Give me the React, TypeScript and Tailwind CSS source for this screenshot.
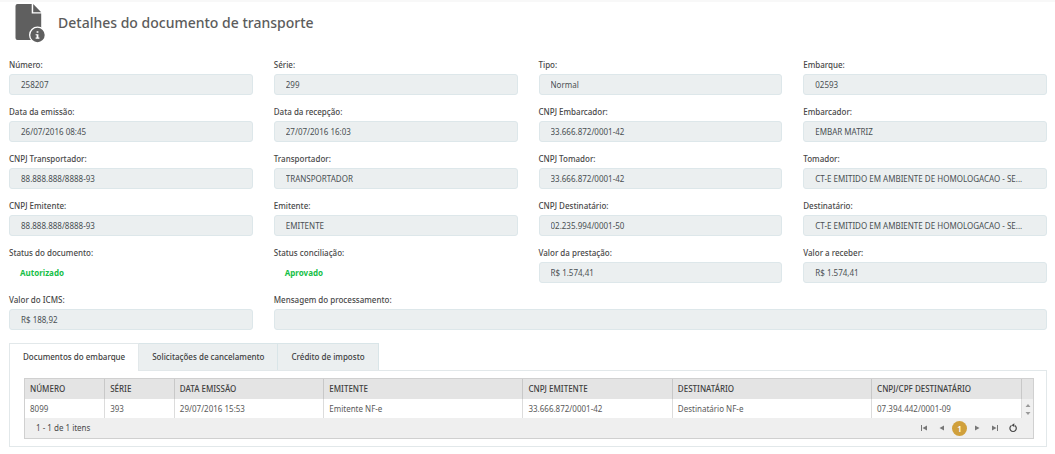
import { useState } from "react";

type FieldData = {
  id: string;
  label: string;
  value: string;
  kind?: "status";
  wide?: boolean;
};

const fields: FieldData[] = [
  { id: "numero", label: "Número:", value: "258207" },
  { id: "serie", label: "Série:", value: "299" },
  { id: "tipo", label: "Tipo:", value: "Normal" },
  { id: "embarque", label: "Embarque:", value: "02593" },
  { id: "emissao", label: "Data da emissão:", value: "26/07/2016 08:45" },
  { id: "recepcao", label: "Data da recepção:", value: "27/07/2016 16:03" },
  { id: "cnpj-embarcador", label: "CNPJ Embarcador:", value: "33.666.872/0001-42" },
  { id: "embarcador", label: "Embarcador:", value: "EMBAR MATRIZ" },
  { id: "cnpj-transportador", label: "CNPJ Transportador:", value: "88.888.888/8888-93" },
  { id: "transportador", label: "Transportador:", value: "TRANSPORTADOR" },
  { id: "cnpj-tomador", label: "CNPJ Tomador:", value: "33.666.872/0001-42" },
  { id: "tomador", label: "Tomador:", value: "CT-E EMITIDO EM AMBIENTE DE HOMOLOGACAO - SE..." },
  { id: "cnpj-emitente", label: "CNPJ Emitente:", value: "88.888.888/8888-93" },
  { id: "emitente", label: "Emitente:", value: "EMITENTE" },
  { id: "cnpj-destinatario", label: "CNPJ Destinatário:", value: "02.235.994/0001-50" },
  { id: "destinatario", label: "Destinatário:", value: "CT-E EMITIDO EM AMBIENTE DE HOMOLOGACAO - SE..." },
  { id: "status-documento", label: "Status do documento:", value: "Autorizado", kind: "status" },
  { id: "status-conciliacao", label: "Status conciliação:", value: "Aprovado", kind: "status" },
  { id: "valor-prestacao", label: "Valor da prestação:", value: "R$ 1.574,41" },
  { id: "valor-receber", label: "Valor a receber:", value: "R$ 1.574,41" },
  { id: "valor-icms", label: "Valor do ICMS:", value: "R$ 188,92" },
  { id: "mensagem", label: "Mensagem do processamento:", value: "", wide: true },
];

const tabs = ["Documentos do embarque", "Solicitações de cancelamento", "Crédito de imposto"];

const columns = [
  { title: "NÚMERO", width: "w-[8%]" },
  { title: "SÉRIE", width: "w-[7%]" },
  { title: "DATA EMISSÃO", width: "w-[15%]" },
  { title: "EMITENTE", width: "w-[20%]" },
  { title: "CNPJ EMITENTE", width: "w-[15%]" },
  { title: "DESTINATÁRIO", width: "w-[20%]" },
  { title: "CNPJ/CPF DESTINATÁRIO", width: "w-[15%]" },
];

const row = [
  "8099",
  "393",
  "29/07/2016 15:53",
  "Emitente NF-e",
  "33.666.872/0001-42",
  "Destinatário NF-e",
  "07.394.442/0001-09",
];

function DocumentIcon() {
  return (
    <svg viewBox="0 0 32 40" className="h-10 w-8 shrink-0" aria-hidden="true">
      <path d="M2.500 1h14.200v9.500h9.500V37H2.500A2 2 0 0 1 .5 35V3a2 2 0 0 1 2-2z" fill="#5f5f5f" />
      <path d="M18.200 1l8 8.200h-8z" fill="#5f5f5f" />
      <circle cx="22.500" cy="32" r="8.500" fill="#fff" />
      <circle cx="22.500" cy="32" r="7.200" fill="#5f5f5f" />
      <path d="M21.600 28.200h1.800v1.600h-1.800zM20.600 31.200h2.800v3.400h1v1.100h-3.800v-1.100h1v-2.300h-1z" fill="#fff" />
    </svg>
  );
}

function Field({ field }: { field: FieldData }) {
  return (
    <div className={field.wide ? "col-span-3 min-w-0" : "min-w-0"}>
      <label htmlFor={field.id} className="block h-4 text-[8px] leading-[13px] font-medium text-[#484848]">
        {field.label}
      </label>
      {field.kind === "status" ? (
        <output id={field.id} className="flex h-[21px] items-center px-[11px] text-[8px] font-bold text-[#16c047]">
          {field.value}
        </output>
      ) : (
        <input
          id={field.id}
          readOnly
          value={field.value}
          className="block h-[21px] w-full rounded-[3px] border border-[#dde7ea] bg-[#ebeff0] pr-2 pl-[11px] text-[8px] text-ellipsis text-[#4a4f53] outline-none"
        />
      )}
    </div>
  );
}

function PagerButton({ label, path }: { label: string; path: string }) {
  return (
    <button type="button" aria-label={label} className="flex h-4 w-[18px] items-center justify-center">
      <svg viewBox="0 0 8 8" className="size-2" aria-hidden="true">
        <path d={path} fill="#777" />
      </svg>
    </button>
  );
}

export default function App() {
  const [active, setActive] = useState(0);

  return (
    <main className="border-t-2 border-[#f8f8f8] bg-white pr-2 pb-2 pl-[9px] font-['Noto_Sans','Open_Sans',sans-serif]">
      <header className="flex items-center gap-[11px] pt-px pl-[6px]">
        <DocumentIcon />
        <h1 className="text-[14px] leading-5 font-medium text-[#5c5c5c]">Detalhes do documento de transporte</h1>
      </header>

      <form className="mt-[15px] grid grid-cols-4 gap-x-[21px] gap-y-[10px]">
        {fields.map((field) => (
          <Field key={field.id} field={field} />
        ))}
      </form>

      <section className="mt-[13px]">
        <div role="tablist" className="flex">
          {tabs.map((tab, index) => (
            <button
              key={tab}
              id={`tab-${index}`}
              type="button"
              role="tab"
              aria-selected={index === active}
              aria-controls="tab-panel"
              onClick={() => setActive(index)}
              className={
                index === active
                  ? "relative -mb-px h-[28px] border border-b-0 border-[#e2e8ea] bg-white px-[13px] pb-px text-[8px] font-medium text-[#404040]"
                  : "h-[27px] border-t border-r border-[#d9e5e8] bg-[#ebeff0] px-[13px] text-[8px] font-medium text-[#404040]"
              }
            >
              {tab}
            </button>
          ))}
        </div>

        <div
          id="tab-panel"
          role="tabpanel"
          aria-labelledby={`tab-${active}`}
          className="border border-[#e2e8ea] py-[7px] pr-[12px] pl-[14px]"
        >
          <div className="border border-[#d0d0d0]">
            <table className="w-full table-fixed border-collapse text-left text-[8px]">
              <thead>
                <tr className="h-[20px] bg-[#e4e4e4] text-[#404040]">
                  {columns.map((column) => (
                    <th
                      key={column.title}
                      scope="col"
                      className={`${column.width} border-r border-[#c8c8c8] px-[5px] font-medium whitespace-nowrap`}
                    >
                      {column.title}
                    </th>
                  ))}
                  <td className="w-[12px]" />
                </tr>
              </thead>
              <tbody>
                <tr className="h-[19px] text-[#5a5a5a]">
                  {row.map((cell, index) => (
                    <td
                      key={columns[index].title}
                      className="border-r border-[#dcdcdc] px-[5px] whitespace-nowrap"
                    >
                      {active === 0 ? cell : ""}
                    </td>
                  ))}
                  <td className="w-[12px] bg-[#f0f0f0]">
                    <svg viewBox="0 0 12 18" className="block h-[18px] w-3" aria-hidden="true">
                      <path d="M6 4l2.500 3h-5zM6 15l2.500-3h-5z" fill="#999" />
                    </svg>
                  </td>
                </tr>
              </tbody>
            </table>
            <div className="flex h-5 items-center justify-between bg-[#efefef] pr-[11px] pl-[11px] text-[8px] text-[#4a4a4a]">
              <span>1 - 1 de 1 itens</span>
              <nav className="flex items-center">
                <PagerButton label="Primeira página" path="M1 1h1v6H1zM7 1.500v5L2.500 4z" />
                <PagerButton label="Página anterior" path="M6 1.500v5L1.500 4z" />
                <button
                  type="button"
                  aria-current="page"
                  className="mx-px size-[15px] rounded-full bg-[#d0a03c] text-center text-[8px] leading-[15px] font-semibold text-white"
                >
                  1
                </button>
                <PagerButton label="Próxima página" path="M2 1.500v5L6.500 4z" />
                <PagerButton label="Última página" path="M6 1h1v6H6zM1 1.500v5L5.500 4z" />
                <button type="button" aria-label="Atualizar" className="flex h-4 w-[18px] items-center justify-center">
                  <svg viewBox="0 0 10 10" className="size-[10px]" aria-hidden="true">
                    <path d="M3.400 2.600A3.200 3.200 0 1 0 6.800 2.600" fill="none" stroke="#444" strokeWidth="1.200" />
                    <path d="M3.500 2.200L6.300.3v3.800z" fill="#444" />
                  </svg>
                </button>
              </nav>
            </div>
          </div>
        </div>
      </section>
    </main>
  );
}
